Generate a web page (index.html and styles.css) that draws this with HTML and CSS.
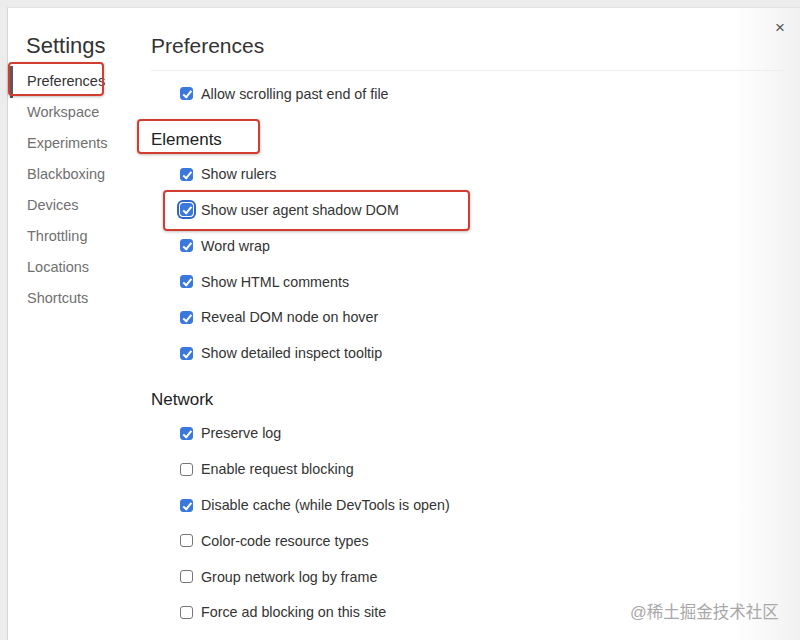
FILE: index.html
```html
<!DOCTYPE html>
<html>
<head>
<meta charset="utf-8">
<link rel="stylesheet" href="styles.css">
</head>
<body>
<div class="dialog">
  <aside class="sidebar">
    <div class="title">Settings</div>
    <ul class="nav">
      <li class="nav-item selected"><span class="mark mark-nav"></span>Preferences</li>
      <li class="nav-item">Workspace</li>
      <li class="nav-item">Experiments</li>
      <li class="nav-item">Blackboxing</li>
      <li class="nav-item">Devices</li>
      <li class="nav-item">Throttling</li>
      <li class="nav-item">Locations</li>
      <li class="nav-item">Shortcuts</li>
    </ul>
  </aside>
  <main class="main">
    <div class="header">Preferences</div>
    <div class="content">
      <div class="row"><span class="cb on"></span>Allow scrolling past end of file</div>

      <div class="section-title"><span class="mark mark-elements"></span>Elements</div>
      <div class="row"><span class="cb on"></span>Show rulers</div>
      <div class="row"><span class="mark mark-row"></span><span class="cb on focus"></span>Show user agent shadow DOM</div>
      <div class="row"><span class="cb on"></span>Word wrap</div>
      <div class="row"><span class="cb on"></span>Show HTML comments</div>
      <div class="row"><span class="cb on"></span>Reveal DOM node on hover</div>
      <div class="row"><span class="cb on"></span>Show detailed inspect tooltip</div>

      <div class="section-title">Network</div>
      <div class="row"><span class="cb on"></span>Preserve log</div>
      <div class="row"><span class="cb"></span>Enable request blocking</div>
      <div class="row"><span class="cb on"></span>Disable cache (while DevTools is open)</div>
      <div class="row"><span class="cb"></span>Color-code resource types</div>
      <div class="row"><span class="cb"></span>Group network log by frame</div>
      <div class="row"><span class="cb"></span>Force ad blocking on this site</div>
    </div>
  </main>
  <div class="close">×</div>
  <div class="watermark">@稀土掘金技术社区</div>
</div>
</body>
</html>
```

FILE: styles.css
```css
* { box-sizing: border-box; }
html, body { margin: 0; padding: 0; }
body {
  width: 800px;
  height: 640px;
  overflow: hidden;
  background: #ececec;
  font-family: "Liberation Sans", Arial, "Noto Sans CJK SC", sans-serif;
  color: #333;
}
.dialog {
  position: relative;
  margin: 7px 0 0 7px;
  height: 633px;
  display: flex;
  background: linear-gradient(to right, #ffffff 0, #ffffff 725px, #f1f1f1 793px);
  border-left: 1px solid #d8d8d8;
  border-top: 1px solid #e2e2e2;
}
.sidebar {
  width: 143px;
  padding: 25px 0 0 18px;
}
.title {
  font-size: 22px;
  line-height: 26px;
  color: #333;
}
.nav {
  list-style: none;
  margin: 6.5px 0 0 1px;
  padding: 0;
}
.nav-item {
  position: relative;
  height: 31.1px;
  line-height: 31px;
  font-size: 14.5px;
  color: #707070;
}
.nav-item.selected { color: #333; }
.nav-item.selected::before {
  content: "";
  position: absolute;
  left: -17px;
  top: 0;
  width: 3px;
  height: 32px;
  background: #5a5a5a;
}
.main {
  flex: 1;
  padding: 25px 15px 0 0;
}
.header {
  font-size: 21px;
  line-height: 26px;
  padding-bottom: 11px;
  border-bottom: 1px solid #eeeeee;
  color: #333;
}
.content {
  padding-top: 5px;
}
.row {
  position: relative;
  height: 35.8px;
  display: flex;
  align-items: center;
  padding-left: 29px;
  font-size: 14.3px;
  color: #333;
}
.section-title {
  position: relative;
  margin-top: 11.5px;
  height: 33px;
  line-height: 33px;
  font-size: 17px;
  color: #222;
}
.cb {
  position: relative;
  width: 13px;
  height: 13px;
  margin-right: 8px;
  border: 1px solid #767676;
  border-radius: 3px;
  background: #fff;
  flex: none;
}
.cb.on {
  background: #3a78dc;
  border-color: #3a78dc;
}
.cb.on::after {
  content: "";
  position: absolute;
  left: 3.5px;
  top: 1px;
  width: 3px;
  height: 6.5px;
  border-right: 2px solid #fff;
  border-bottom: 2px solid #fff;
  transform: rotate(40deg);
}
.cb.focus {
  box-shadow: 0 0 0 1px #fff, 0 0 0 3px #2f65c4;
}
.mark {
  position: absolute;
  border: 2px solid #d33c30;
  border-radius: 4px;
  box-shadow: 0 1px 3px rgba(0, 0, 0, 0.25);
  pointer-events: none;
}
.mark-nav {
  left: -19px;
  top: -3.5px;
  width: 96px;
  height: 34px;
}
.mark-elements {
  left: -14px;
  top: -4px;
  width: 123px;
  height: 35px;
}
.mark-row {
  left: 12px;
  top: -2px;
  width: 307px;
  height: 41px;
}
.close {
  position: absolute;
  right: 15px;
  top: 10px;
  font-size: 17px;
  color: #555;
}
.watermark {
  position: absolute;
  left: 622px;
  top: 591px;
  font-size: 16.5px;
  color: #a8a8a8;
  font-family: "Liberation Sans", "Noto Sans CJK SC", sans-serif;
}
```
